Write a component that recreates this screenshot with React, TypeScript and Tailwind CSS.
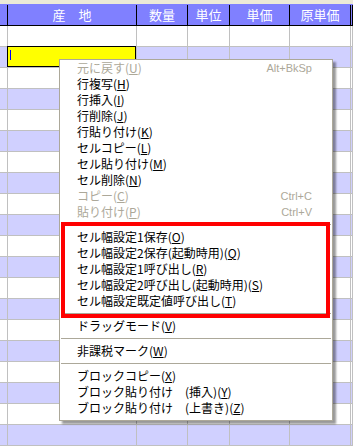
import React from 'react';

// Spreadsheet grid with a right-click context menu (Windows XP look)

const COLS = [
  { w: 'w-[8px]', label: '' },
  { w: 'w-[129px]', label: '産　地' },
  { w: 'w-[51px]', label: '数量' },
  { w: 'w-[42px]', label: '単位' },
  { w: 'w-[60px]', label: '単価' },
  { w: 'w-[61px]', label: '原単価' },
  { w: 'flex-1', label: '' },
];

type Item =
  | { sep: true }
  | { sep?: false; label: string; key: string; shortcut?: string; disabled?: boolean };

const ITEMS: Item[] = [
  { label: '元に戻す', key: 'U', shortcut: 'Alt+BkSp', disabled: true },
  { label: '行複写', key: 'H' },
  { label: '行挿入', key: 'I' },
  { label: '行削除', key: 'J' },
  { label: '行貼り付け', key: 'K' },
  { label: 'セルコピー', key: 'L' },
  { label: 'セル貼り付け', key: 'M' },
  { label: 'セル削除', key: 'N' },
  { label: 'コピー', key: 'C', shortcut: 'Ctrl+C', disabled: true },
  { label: '貼り付け', key: 'P', shortcut: 'Ctrl+V', disabled: true },
  { sep: true },
  { label: 'セル幅設定1保存', key: 'O' },
  { label: 'セル幅設定2保存(起動時用)', key: 'Q' },
  { label: 'セル幅設定1呼び出し', key: 'R' },
  { label: 'セル幅設定2呼び出し(起動時用)', key: 'S' },
  { label: 'セル幅設定既定値呼び出し', key: 'T' },
  { sep: true },
  { label: 'ドラッグモード', key: 'V' },
  { sep: true },
  { label: '非課税マーク', key: 'W' },
  { sep: true },
  { label: 'ブロックコピー', key: 'X' },
  { label: 'ブロック貼り付け　(挿入)', key: 'Y' },
  { label: 'ブロック貼り付け　(上書き)', key: 'Z' },
];

const FONT = "font-['MS_UI_Gothic','Noto_Sans_CJK_JP',sans-serif]";

function Row({ i }: { i: number }) {
  const lav = i % 2 === 1;
  return (
    <div className={`flex h-[21px] border-b border-[#c0c0c0] ${lav ? 'bg-[#d0d0ff]' : 'bg-white'}`}>
      {COLS.map((c, j) => (
        <div key={j} className={`${c.w} shrink-0 border-r border-[#c0c0c0] relative`}>
          {i === 1 && j === 1 && (
            <div className="absolute -left-[1px] -top-[1px] w-[129px] h-[21px] bg-[#ffff00] border border-black">
              <div className="ml-[2px] mt-[3px] w-[1px] h-[10px] bg-[#0000ff]" />
            </div>
          )}
        </div>
      ))}
    </div>
  );
}

export default function App() {
  return (
    <div className={`relative w-[353px] h-[447px] overflow-hidden bg-white ${FONT}`}>
      <div className="h-[4px] bg-[#ece9d8]" />
      <div className="flex h-[22px] bg-[#8080ff] border-b border-black border-t border-t-[#8080ff]">
        {COLS.map((c, j) => (
          <div
            key={j}
            className={`${c.w} shrink-0 border-r border-black flex items-center justify-center text-white text-[13px]`}
          >
            {c.label}
          </div>
        ))}
      </div>
      {Array.from({ length: 20 }).map((_, i) => (
        <Row key={i} i={i} />
      ))}

      {/* Context menu */}
      <div className="absolute left-[59px] top-[59px] w-[274px] bg-white border border-[#aca899] pb-[4px] shadow-[3px_3px_2px_rgba(0,0,0,0.4)] text-[12px]">
        {ITEMS.map((it, i) =>
          it.sep ? (
            <div key={i} className="h-[9px] flex items-center px-[1px]">
              <div className="w-full h-[1px] bg-[#aca899]" />
            </div>
          ) : (
            <div
              key={i}
              className={`h-[16px] flex items-center justify-between pl-[17px] pr-[20px] leading-[16px] ${it.disabled ? 'text-[#aca899]' : 'text-black'}`}
            >
              <span className="whitespace-nowrap">
                {it.label}(<span className="underline underline-offset-1">{it.key}</span>)
              </span>
              {it.shortcut && <span className="font-['Liberation_Sans',sans-serif] text-[11px]">{it.shortcut}</span>}
            </div>
          ),
        )}
      </div>

      {/* Highlight box */}
      <div className="absolute left-[61px] top-[222px] w-[269px] h-[96px] border-[4px] border-[#ff0000]" />
    </div>
  );
}
